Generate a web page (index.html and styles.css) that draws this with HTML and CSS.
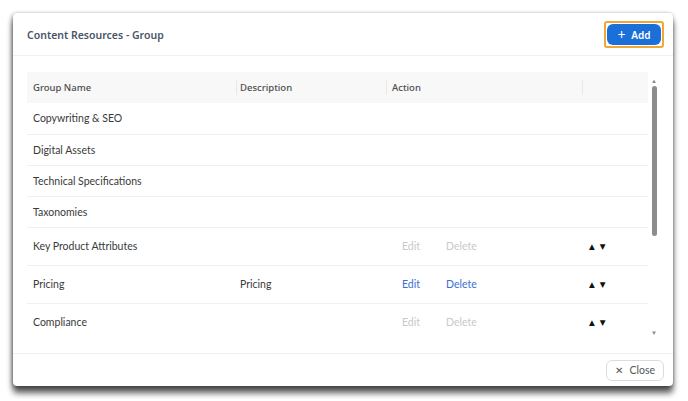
FILE: index.html
```html
<!DOCTYPE html>
<html lang="en">
<head>
    <meta charset="UTF-8">
    <title>Content Resources - Group</title>
    <link rel="stylesheet" href="styles.css">
</head>
<body>
    <div class="modal">
        <header class="modal-header">
            <h2>Content Resources - Group</h2>
            <span class="focus-ring">
                <button class="btn-add" type="button"><span class="plus">+</span> Add</button>
            </span>
        </header>
        <div class="modal-body">
            <div class="table-scroll">
                <table class="group-table">
                    <thead>
                        <tr>
                            <th class="col-name">Group Name</th>
                            <th class="col-desc">Description</th>
                            <th class="col-action">Action</th>
                            <th class="col-order"></th>
                        </tr>
                    </thead>
                    <tbody>
                        <tr><td>Copywriting &amp; SEO</td><td></td><td></td><td></td></tr>
                        <tr><td>Digital Assets</td><td></td><td></td><td></td></tr>
                        <tr><td>Technical Specifications</td><td></td><td></td><td></td></tr>
                        <tr><td>Taxonomies</td><td></td><td></td><td></td></tr>
                        <tr class="tall">
                            <td>Key Product Attributes</td>
                            <td></td>
                            <td><div class="actions disabled"><a>Edit</a><a>Delete</a></div></td>
                            <td><div class="order"><span>&#9650;</span><span>&#9660;</span></div></td>
                        </tr>
                        <tr class="tall">
                            <td>Pricing</td>
                            <td>Pricing</td>
                            <td><div class="actions"><a href="#">Edit</a><a href="#">Delete</a></div></td>
                            <td><div class="order"><span>&#9650;</span><span>&#9660;</span></div></td>
                        </tr>
                        <tr class="tall">
                            <td>Compliance</td>
                            <td></td>
                            <td><div class="actions disabled"><a>Edit</a><a>Delete</a></div></td>
                            <td><div class="order"><span>&#9650;</span><span>&#9660;</span></div></td>
                        </tr>
                    </tbody>
                </table>
            </div>
            <div class="scrollbar">
                <span class="arrow">&#9650;</span>
                <div class="track"><div class="thumb"></div></div>
                <span class="arrow">&#9660;</span>
            </div>
        </div>
        <footer class="modal-footer">
            <button class="btn-close" type="button"><span class="x">&#10005;</span> Close</button>
        </footer>
    </div>
</body>
</html>
```

FILE: styles.css
```css
*,
::before,
::after {
    box-sizing: border-box;
}
body {
    margin: 0;
    padding: 13px;
    background-color: #fff;
    font-family: Lato, "Noto Sans", sans-serif;
    font-size: 10.5px;
    color: #3a3a3a;
}
.modal {
    width: 660px;
    height: 373px;
    display: flex;
    flex-direction: column;
    background-color: #fff;
    border-radius: 4px;
    box-shadow: 0 7px 6px rgba(0, 0, 0, .65), -1px 1px 4px rgba(0, 0, 0, .35), 0 0 3px rgba(0, 0, 0, .1);
}
.modal-header {
    height: 43px;
    display: flex;
    align-items: center;
    justify-content: space-between;
    padding: 0 9px 0 14px;
    border-bottom: 1px solid #f0f0f0;
}
.modal-header h2 {
    margin: 0 0 -1px;
    font-family: "Noto Sans", sans-serif;
    font-size: 10.5px;
    font-weight: 600;
    color: #4a5568;
}
.focus-ring {
    display: inline-block;
    padding: 1px;
    border: 2px solid #f2a636;
    border-radius: 3px;
}
.btn-add {
    display: block;
    width: 54px;
    height: 21px;
    border: 0;
    border-radius: 6px;
    background-color: #1a6fd8;
    color: #fff;
    font-family: "Noto Sans", sans-serif;
    font-size: 10px;
    font-weight: 600;
}
.btn-add .plus {
    font-size: 14px;
    font-weight: 400;
    margin-right: 3px;
    vertical-align: -1px;
}

.modal-body {
    flex: 1;
    display: flex;
    padding: 16px 15px 0 14px;
    border-bottom: 1px solid #f0f0f0;
    overflow: hidden;
}
.table-scroll {
    width: 621px;
    height: 282px;
    overflow: hidden;
}
.group-table {
    width: 100%;
    border-collapse: collapse;
    table-layout: fixed;
}
.group-table th {
    height: 31px;
    padding: 0 6px;
    background-color: #f8f8f8;
    text-align: left;
    font-family: "Noto Sans", sans-serif;
    font-size: 9.5px;
    font-weight: 500;
    color: #4d4d4d;
    position: relative;
}
.group-table th + th::before {
    content: "";
    position: absolute;
    left: 0;
    top: 8px;
    bottom: 8px;
    border-left: 1px solid #e8e8e8;
}
.col-name { width: 209px; }
.col-desc { width: 150px; padding-left: 4px !important; }
.col-action { width: 196px; }
.group-table td {
    height: 31px;
    padding: 0 6px;
    border-bottom: 1px solid #efefef;
    white-space: nowrap;
}
.group-table td:nth-child(2) {
    padding-left: 4px;
}
.group-table tr.tall td {
    height: 38px;
}
.group-table tr:last-child td {
    border-bottom: 0;
}
.actions {
    display: flex;
    gap: 26px;
    padding-left: 10px;
}
.actions a {
    color: #3a6fd2;
    text-decoration: none;
}
.actions.disabled a {
    color: #c9c9c9;
}
.order {
    display: flex;
    gap: 5px;
    padding-left: 1px;
    font-family: "DejaVu Sans", sans-serif;
    font-size: 7.5px;
    color: #111;
}

.scrollbar {
    width: 8px;
    height: 262px;
    margin: 4px 0 0 2px;
    display: flex;
    flex-direction: column;
    align-items: center;
}
.scrollbar .arrow {
    font-size: 6px;
    line-height: 10px;
    color: #8a8a8a;
}
.track {
    flex: 1;
    width: 100%;
    display: flex;
    justify-content: center;
}
.thumb {
    width: 5px;
    height: 150px;
    border-radius: 3px;
    background-color: #8c8c8c;
}

.modal-footer {
    height: 32px;
    display: flex;
    align-items: center;
    justify-content: flex-end;
    padding: 0 9px;
}
.btn-close {
    width: 58px;
    height: 21px;
    border: 1px solid #dcdcdc;
    border-radius: 6px;
    background-color: #fff;
    color: #555;
    font-family: inherit;
    font-size: 10.5px;
}
.btn-close .x {
    font-size: 10px;
    margin-right: 4px;
}
```
